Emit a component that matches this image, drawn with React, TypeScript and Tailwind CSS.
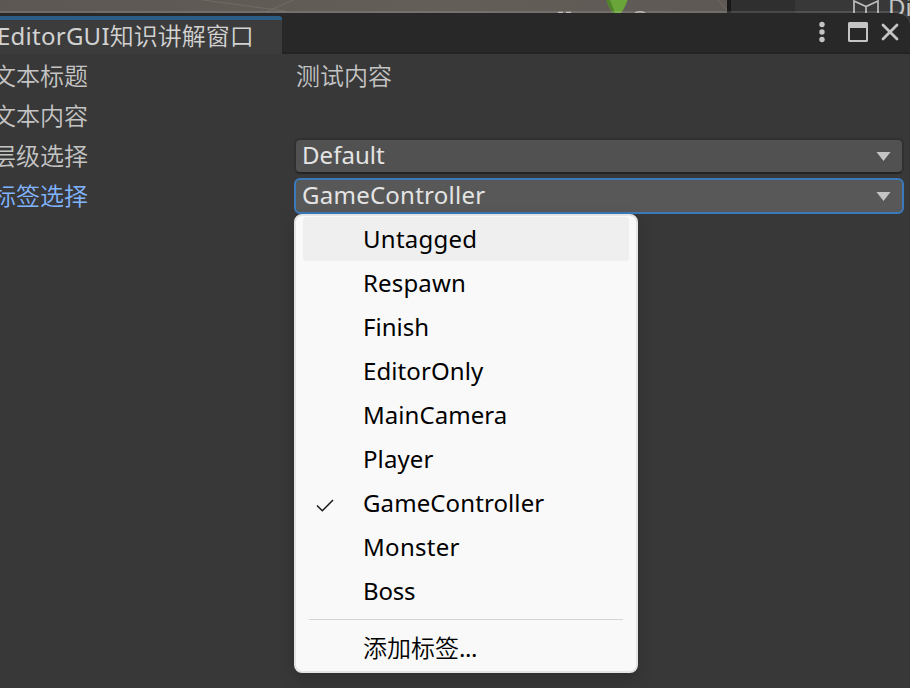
import React from "react";

const tags: { name: string; cls: string }[] = [
  { name: "Untagged", cls: "tracking-[0.25px]" },
  { name: "Respawn", cls: "tracking-[0.15px]" },
  { name: "Finish", cls: "tracking-[0px]" },
  { name: "EditorOnly", cls: "tracking-[0.1px]" },
  { name: "MainCamera", cls: "tracking-[0.05px]" },
  { name: "Player", cls: "tracking-[0.1px]" },
  { name: "GameController", cls: "tracking-[0.1px]" },
  { name: "Monster", cls: "tracking-[0.3px]" },
  { name: "Boss", cls: "tracking-[-0.2px]" },
];

function SceneStrip() {
  return (
    <svg className="block h-[16px] w-full shrink-0" viewBox="0 0 910 16">
      <defs>
        <linearGradient id="ground" x1="0" x2="1" y1="0" y2="0">
          <stop offset="0" stopColor="#5c5752" />
          <stop offset="0.6" stopColor="#645e59" />
          <stop offset="1" stopColor="#5e5954" />
        </linearGradient>
      </defs>
      <rect width="727" height="16" fill="url(#ground)" />
      <path d="M203 0L285 11M293 0L266 12M718 0L727 10" stroke="#77716c" strokeWidth="0.7" fill="none" />
      <rect x="727" width="4" height="16" fill="#191919" />
      <rect x="731" width="64" height="16" fill="#2f2f2f" />
      <rect x="795" width="115" height="16" fill="#383838" />
      <path d="M606.500 0H627.500Q625 8 621 13H613Q609 8 606.500 0Z" fill="#6aa53a" />
      <path d="M606.500 0H610L615 13H613Q609 8 606.500 0Z" fill="#4f8329" />
      <path d="M558 12.500h5M566 12.500h5M635 13Q640 10.500 645 13" stroke="#b5b2af" strokeWidth="1.300" fill="none" />
      <path d="M854 16V1L866 6.500L878 1V16M866 6.500V16" stroke="#bdbdbd" strokeWidth="1.700" fill="none" />
      <text x="888" y="16" fontSize="24" fill="#c4c4c4">Di</text>
    </svg>
  );
}

function TitleBar() {
  return (
    <header className="-mt-[5px] flex h-[43px] shrink-0 items-end justify-between rounded-tr-[14px] border-t-2 border-b-2 border-t-white/12 border-b-[#232323] bg-[#282828] bg-clip-padding">
      <div className="-mb-0.5 h-[38px] w-[282px] overflow-hidden rounded-tr-[3px] border-t-4 border-[#2c5d87] bg-[#3c3c3c]">
        <h1 className="-ml-[3px] text-[24px] leading-[32px] font-normal whitespace-nowrap text-[#d2d2d2]">
          <span className="tracking-[0.25px]">EditorGUI</span>
          <span className="font-[350]">知识讲解窗口</span>
        </h1>
      </div>
      <svg className="block" width="94" height="39" viewBox="816 13 94 39" fill="none">
        <g fill="#c4c4c4">
          <circle cx="822" cy="24.500" r="2.700" />
          <circle cx="822" cy="32" r="2.700" />
          <circle cx="822" cy="39.500" r="2.700" />
          <path fillRule="evenodd" d="M849 22h18l1 1v18l-1 1h-18l-1-1V23ZM850 28v12h16V28Z" />
        </g>
        <path d="M883 25L897 39M897 25L883 39" stroke="#c4c4c4" strokeWidth="2.800" strokeLinecap="round" />
      </svg>
    </header>
  );
}

function Row({ label, active, children }: { label: string; active?: boolean; children?: React.ReactNode }) {
  return (
    <div className="flex h-10 items-center">
      <div className={`-ml-2 w-[302px] shrink-0 leading-10 font-[350] whitespace-nowrap ${active ? "text-[#81b4ff]" : "text-[#c4c4c4]"}`}>
        {label}
      </div>
      {children}
    </div>
  );
}

function Select({ value, focused, cls }: { value: string; focused?: boolean; cls: string }) {
  return (
    <div
      className={`flex h-9 w-[610px] items-center justify-between rounded-[6px] border-2 pr-[11px] pl-[6px] text-[#e4e4e4] ${
        focused ? "border-[#3a79bb] bg-[#585858]" : "border-[#303030] border-b-[#242424] bg-[#515151]"
      }`}
    >
      <span className={`pb-0.5 leading-[30px] ${cls}`}>{value}</span>
      <svg className="mt-px" width="15" height="9" viewBox="0 0 15 9">
        <path d="M0.500 0H14.500L7.500 9Z" fill="#c4c4c4" />
      </svg>
    </div>
  );
}

function TagMenu() {
  return (
    <div className="absolute top-[214px] left-[294px] h-[459px] w-[344px] rounded-[8px] border-2 border-[#e3e4e4] bg-[#f9f9f9] pt-px text-black shadow-[0_6px_16px_rgba(0,0,0,0.18)]">
      <ul>
        {tags.map((t, i) => (
          <li
            key={t.name}
            className={`mx-[7px] flex h-11 items-center rounded-[4px] ${i === 0 ? "bg-[#efefef]" : ""}`}
          >
            <span className="flex w-[60px] justify-start pl-[13px]">
              {t.name === "GameController" && (
                <svg className="mt-[5px]" width="18" height="13" viewBox="0 0 18 13" fill="none">
                  <path d="M1 6.500L6.300 11.800L17 1" stroke="#1b1b1b" strokeWidth="1.500" />
                </svg>
              )}
            </span>
            <span className={t.cls}>{t.name}</span>
          </li>
        ))}
      </ul>
      <hr className="mx-[13px] mt-[6px] border-[#d5d5d5]" />
      <div className="mt-[6px] pl-[67px] leading-[44px]">
        <span className="font-[350]">添加标签</span>
        <span className="tracking-[-0.4px]">...</span>
      </div>
    </div>
  );
}

export default function App() {
  return (
    <div className="relative flex h-[688px] w-[910px] flex-col overflow-hidden bg-[#383838] font-['Noto_Sans','Noto_Sans_CJK_SC',sans-serif] text-[24px]">
      <SceneStrip />
      <TitleBar />
      <main className="flex flex-col pt-[2px]">
        <Row label="文本标题">
          <span className="ml-[2px] leading-10 font-[350] text-[#c4c4c4]">测试内容</span>
        </Row>
        <Row label="文本内容" />
        <Row label="层级选择">
          <Select value="Default" cls="tracking-[0.05px]" />
        </Row>
        <Row label="标签选择" active>
          <Select value="GameController" focused cls="tracking-[0.25px]" />
        </Row>
      </main>
      <TagMenu />
    </div>
  );
}
